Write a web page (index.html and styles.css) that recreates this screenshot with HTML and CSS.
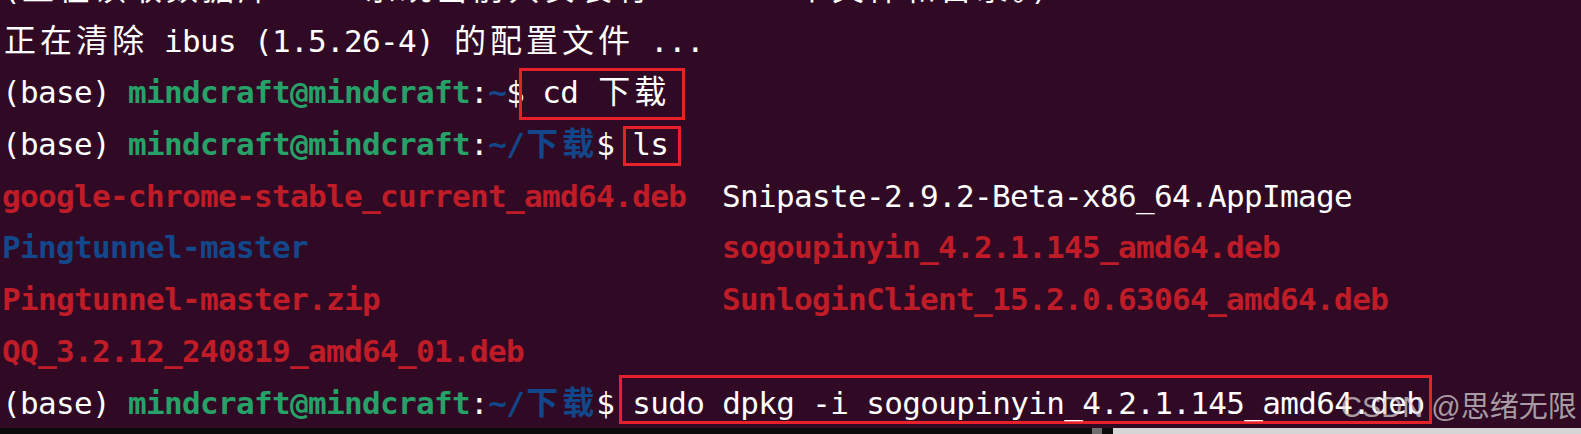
FILE: index.html
```html
<!DOCTYPE html>
<html lang="zh-CN">
<head>
    <meta charset="UTF-8">
    <title>终端 - 下载</title>
    <link rel="stylesheet" href="styles.css">
</head>
<body>
    <div class="term">
        <div class="screen">
            <div class="line">(<span class="w">正在读取数据库</span> ... <span class="w">系统当前共安装有</span> 218342 <span class="w">个文件和目录。</span>)</div>
            <div class="line"><span class="w">正在清除</span> ibus (1.5.26-4) <span class="w">的配置文件</span> ...</div>
            <div class="line">(base) <span class="user">mindcraft@mindcraft</span>:<span class="path">~</span>$ <span class="box box-cd">cd <span class="w">下载</span></span></div>
            <div class="line">(base) <span class="user">mindcraft@mindcraft</span>:<span class="path">~/<span class="w">下载</span></span>$ <span class="box box-ls">ls</span></div>
            <div class="line"><span class="col"><span class="pkg">google-chrome-stable_current_amd64.deb</span></span>Snipaste-2.9.2-Beta-x86_64.AppImage</div>
            <div class="line"><span class="col"><span class="dir">Pingtunnel-master</span></span><span class="pkg">sogoupinyin_4.2.1.145_amd64.deb</span></div>
            <div class="line"><span class="col"><span class="pkg">Pingtunnel-master.zip</span></span><span class="pkg">SunloginClient_15.2.0.63064_amd64.deb</span></div>
            <div class="line"><span class="pkg">QQ_3.2.12_240819_amd64_01.deb</span></div>
            <div class="line">(base) <span class="user">mindcraft@mindcraft</span>:<span class="path">~/<span class="w">下载</span></span>$ <span class="box box-sudo">sudo dpkg -i sogoupinyin_4.2.1.145_amd64.deb</span></div>
        </div>
        <div class="watermark">CSDN @思绪无限</div>
    </div>
    <div class="statusbar">
        <div class="sb-dark"></div>
        <div class="sb-notch"></div>
        <div class="sb-gap"></div>
        <div class="sb-light"></div>
    </div>
</body>
</html>
```

FILE: styles.css
```css
body {
    margin: 0;
    background-color: #300a24;
    overflow: hidden;
}
.term {
    position: relative;
    height: 428px;
    overflow: hidden;
    padding-left: 2px;
    color: #ffffff;
    font-family: "DejaVu Sans Mono", "Liberation Mono", monospace;
    font-size: 31px;
    letter-spacing: -0.66px;
}
.screen {
    margin-top: -36px;
}
.line {
    height: 51.7px;
    line-height: 51.7px;
    white-space: pre;
}
.w {
    font-family: "Noto Sans CJK SC", sans-serif;
    font-size: 32px;
    line-height: 0;
    letter-spacing: 4px;
    padding-left: 2px;
    margin-right: -2px;
}
.user {
    color: #26a269;
    font-weight: bold;
}
.path {
    color: #12488b;
    font-weight: bold;
}
.pkg {
    color: #c01c28;
    font-weight: bold;
}
.dir {
    color: #12488b;
    font-weight: bold;
}
.col {
    display: inline-block;
    width: 720px;
}
.box {
    display: inline-block;
    line-height: 30px;
    border: 3px solid #e8202a;
}
.box-cd {
    margin: 0 -17px -2px -23px;
    padding: 6px 14px 10px 20px;
}
.box-ls {
    margin: 0 -13px 0 -9px;
    padding: 0 10px 4px 6px;
}
.box-sudo {
    margin: -3px -8px 0 -13px;
    padding: 10px 5px 3px 10px;
}
.watermark {
    position: absolute;
    left: 1341px;
    top: 383px;
    font-family: "Liberation Sans", "Noto Sans CJK SC", sans-serif;
    font-size: 29px;
    letter-spacing: 0;
    color: rgba(215, 212, 214, 0.72);
    white-space: nowrap;
}
.statusbar {
    display: flex;
    height: 6px;
    background-color: #0b0b0b;
}
.sb-dark {
    width: 1092px;
}
.sb-notch {
    width: 10px;
    background-color: #6e6e6e;
}
.sb-gap {
    width: 11px;
}
.sb-light {
    flex: 1;
    background-color: #d6d6d6;
}
```
